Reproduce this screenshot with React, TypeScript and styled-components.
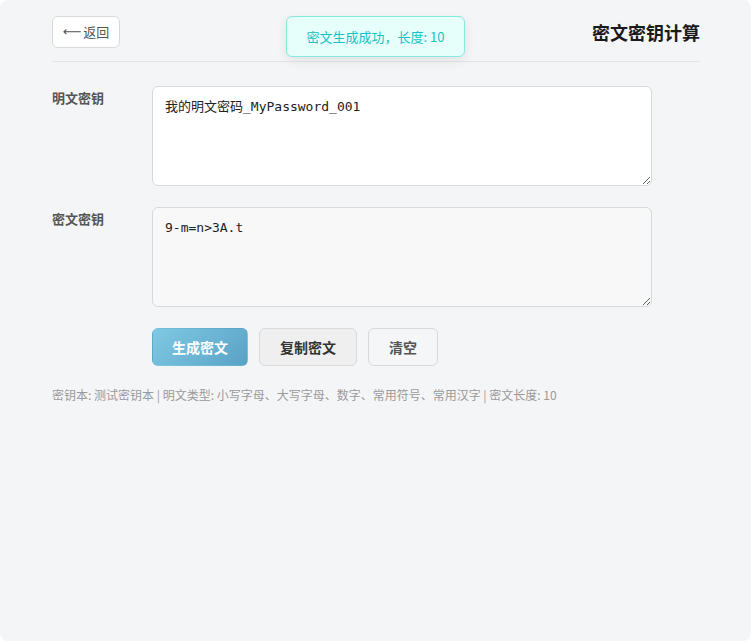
import React, { useState } from "react";
import styled, { createGlobalStyle } from "styled-components";

const Global = createGlobalStyle`
  html, body { margin: 0; padding: 0; background: #ffffff; }
  body { font-family: "Noto Sans CJK SC", "Noto Sans", sans-serif; }
  * { box-sizing: border-box; }
`;

const Page = styled.div`
  position: relative;
  width: 751px;
  height: 641px;
  background: #f4f5f7;
  border-radius: 8px;
  padding: 16px 51px 0 52px;
`;

const Header = styled.header`
  display: flex;
  align-items: center;
  justify-content: space-between;
  height: 46px;
  padding-bottom: 14px;
  border-bottom: 1px solid #e3e4e7;
`;

const BackButton = styled.button`
  height: 32px;
  width: 68px;
  padding: 0;
  border: 1px solid #d9d9d9;
  border-radius: 6px;
  background: #ffffff;
  color: #555555;
  font-family: inherit;
  font-size: 13px;
  display: flex;
  align-items: center;
  justify-content: center;
  gap: 2px;
`;

const Arrow = styled.span`
  font-family: "DejaVu Sans", sans-serif;
  font-size: 13px;
`;

const Title = styled.h1`
  margin: 0;
  font-size: 18px;
  font-weight: 700;
  color: #1a1a1a;
  line-height: 32px;
`;

const Toast = styled.div`
  position: absolute;
  top: 16px;
  left: 286px;
  width: 179px;
  height: 41px;
  display: flex;
  align-items: center;
  justify-content: center;
  background: #e6fffb;
  border: 1px solid #87e8de;
  border-radius: 6px;
  color: #13c2c2;
  font-size: 13px;
  box-shadow: 0 4px 12px rgba(0, 0, 0, 0.08);
`;

const Form = styled.div`
  display: flex;
  flex-direction: column;
  gap: 21px;
  padding-top: 24px;
`;

const Row = styled.div`
  display: flex;
  align-items: flex-start;
`;

const Label = styled.label`
  width: 100px;
  flex: none;
  font-size: 13px;
  font-weight: 700;
  color: #555555;
  padding-top: 3px;
  line-height: 18px;
`;

const Area = styled.textarea<{ $readonly?: boolean }>`
  width: 500px;
  height: 100px;
  padding: 10px 12px;
  border: 1px solid #d9d9d9;
  border-radius: 6px;
  background: ${(p) => (p.$readonly ? "#f8f8f8" : "#ffffff")};
  color: #222222;
  font-family: "DejaVu Sans Mono", "Noto Sans CJK SC", monospace;
  font-size: 13px;
  line-height: 20px;
  outline: none;
  resize: vertical;
`;

const Actions = styled.div`
  display: flex;
  gap: 11px;
  padding-left: 100px;
`;

const Btn = styled.button<{ $variant: "primary" | "gray" | "plain"; $w: number }>`
  height: 38px;
  width: ${(p) => p.$w}px;
  padding: 0;
  border-radius: 6px;
  font-family: inherit;
  font-size: 14px;
  font-weight: 600;
  border: 1px solid
    ${(p) => (p.$variant === "primary" ? "transparent" : "#d9d9d9")};
  background: ${(p) =>
    p.$variant === "primary"
      ? "linear-gradient(135deg, #7fc9e3 0%, #5aa2c6 100%)"
      : p.$variant === "gray"
      ? "#efefef"
      : "#f5f6f8"};
  color: ${(p) =>
    p.$variant === "primary" ? "#ffffff" : p.$variant === "gray" ? "#333333" : "#555555"};
`;

const Info = styled.div`
  margin-top: 20px;
  font-size: 12px;
  color: #9a9a9a;
  line-height: 18px;
`;

export default function App() {
  const [plain, setPlain] = useState("我的明文密码_MyPassword_001");
  const cipher = "9-m=n>3A.t";
  return (
    <Page>
      <Global />
      <Header>
        <BackButton>
          <Arrow>⟵</Arrow>
          <span>返回</span>
        </BackButton>
        <Title>密文密钥计算</Title>
      </Header>
      <Toast>密文生成成功，长度: 10</Toast>
      <Form>
        <Row>
          <Label>明文密钥</Label>
          <Area
            value={plain}
            spellCheck={false}
            onChange={(e) => setPlain(e.target.value)}
          />
        </Row>
        <Row>
          <Label>密文密钥</Label>
          <Area $readonly readOnly value={cipher} />
        </Row>
        <Actions>
          <Btn $variant="primary" $w={96}>生成密文</Btn>
          <Btn $variant="gray" $w={98}>复制密文</Btn>
          <Btn $variant="plain" $w={70}>清空</Btn>
        </Actions>
      </Form>
      <Info>
        密钥本: 测试密钥本 | 明文类型: 小写字母、大写字母、数字、常用符号、常用汉字 | 密文长度: 10
      </Info>
    </Page>
  );
}
